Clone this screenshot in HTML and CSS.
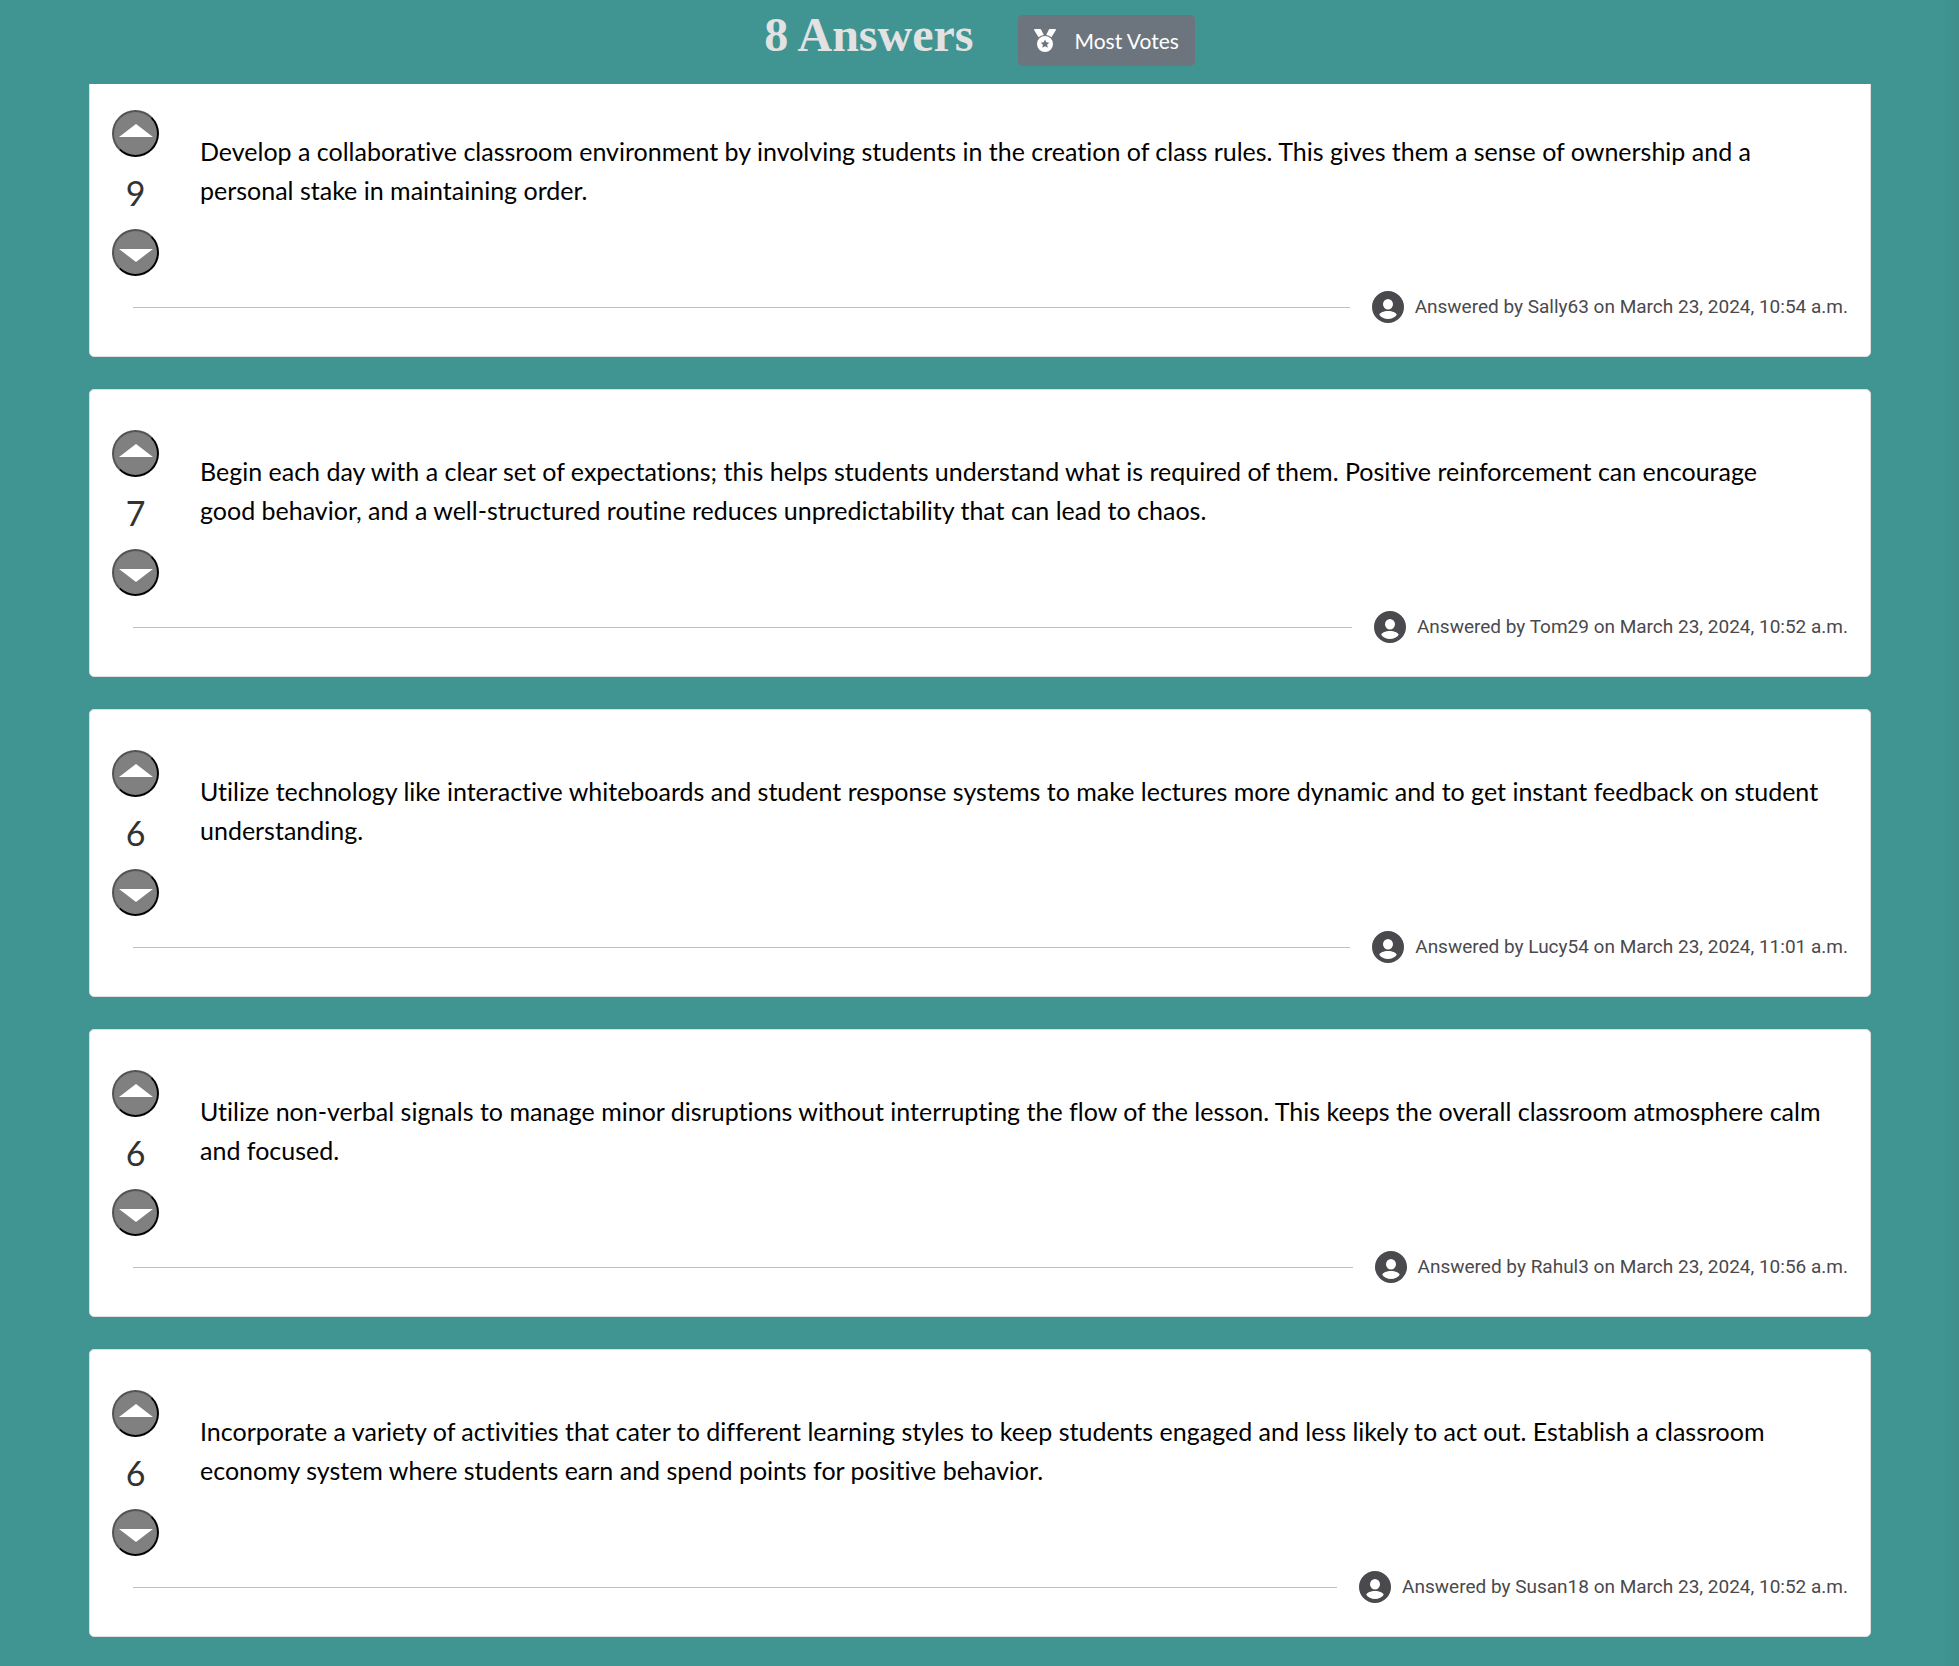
FILE: index.html
```html
<!DOCTYPE html>
<html lang="en">
<head>
<meta charset="utf-8">
<meta name="viewport" content="width=device-width, initial-scale=1">
<title>Answers</title>
<link rel="stylesheet" href="styles.css">
</head>
<body>
<svg class="sprite" aria-hidden="true">
  <symbol id="up" viewBox="0 0 34 13"><path d="M0 13 17 0l17 13z"/></symbol>
  <symbol id="down" viewBox="0 0 34 13"><path d="M0 0h34L17 13z"/></symbol>
  <symbol id="user" viewBox="0 0 32 32"><path fill-rule="evenodd" d="M16 0a16 16 0 1 1 0 32 16 16 0 0 1 0-32zm0 8a5 5.300 0 1 0 0 10.600A5 5.300 0 0 0 16 8zm0 12c-4.500 0-8.200 1.700-8.700 3.800 1.400 2.600 5 4.200 8.700 4.200s7.300-1.600 8.700-4.200C24.200 21.700 20.500 20 16 20z"/></symbol>
</svg>
<header class="topbar">
  <h1 class="title">8 Answers</h1>
  <button class="sort" type="button">
    <svg class="medal" viewBox="0 0 22 23" aria-hidden="true"><path fill-rule="evenodd" d="M.800 0H6c.5 0 .9.200 1.100.600L9.800 5.900A9 9 0 0 0 4.600 8.300L.200 1.200C-.200.600.200 0 .800 0zm20.400 0H16c-.5 0-.9.200-1.100.600l-2.700 5.300a9 9 0 0 1 5.200 2.400l4.400-7.100c.4-.6 0-1.200-.6-1.200zM11 7a8 8 0 1 1 0 16 8 8 0 0 1 0-16zm0 3.600-1.300 2.700-3 .4 2.200 2.100-.6 3 2.700-1.500 2.700 1.500-.6-3 2.200-2.100-3-.4z"/></svg>
    <span>Most Votes</span>
  </button>
</header>
<main class="answers">
  <article class="card">
    <div class="content">
      <div class="votes">
        <button class="vote" type="button" aria-label="Vote up"><svg class="arrow arrow-up"><use href="#up"/></svg></button>
        <span class="count">9</span>
        <button class="vote" type="button" aria-label="Vote down"><svg class="arrow arrow-down"><use href="#down"/></svg></button>
      </div>
      <p class="text">Develop a collaborative classroom environment by involving students in the creation of class rules. This gives them a sense of ownership and a personal stake in maintaining order.</p>
    </div>
    <footer class="meta"><hr class="rule"><svg class="user" aria-hidden="true"><use href="#user"/></svg><span>Answered by Sally63 on March 23, 2024, 10:54 a.m.</span></footer>
  </article>
  <article class="card">
    <div class="content">
      <div class="votes">
        <button class="vote" type="button" aria-label="Vote up"><svg class="arrow arrow-up"><use href="#up"/></svg></button>
        <span class="count">7</span>
        <button class="vote" type="button" aria-label="Vote down"><svg class="arrow arrow-down"><use href="#down"/></svg></button>
      </div>
      <p class="text">Begin each day with a clear set of expectations; this helps students understand what is required of them. Positive reinforcement can encourage<br>good behavior, and a well-structured routine reduces unpredictability that can lead to chaos.</p>
    </div>
    <footer class="meta"><hr class="rule"><svg class="user" aria-hidden="true"><use href="#user"/></svg><span>Answered by Tom29 on March 23, 2024, 10:52 a.m.</span></footer>
  </article>
  <article class="card">
    <div class="content">
      <div class="votes">
        <button class="vote" type="button" aria-label="Vote up"><svg class="arrow arrow-up"><use href="#up"/></svg></button>
        <span class="count">6</span>
        <button class="vote" type="button" aria-label="Vote down"><svg class="arrow arrow-down"><use href="#down"/></svg></button>
      </div>
      <p class="text">Utilize technology like interactive whiteboards and student response systems to make lectures more dynamic and to get instant feedback on student understanding.</p>
    </div>
    <footer class="meta"><hr class="rule"><svg class="user" aria-hidden="true"><use href="#user"/></svg><span>Answered by Lucy54 on March 23, 2024, 11:01 a.m.</span></footer>
  </article>
  <article class="card">
    <div class="content">
      <div class="votes">
        <button class="vote" type="button" aria-label="Vote up"><svg class="arrow arrow-up"><use href="#up"/></svg></button>
        <span class="count">6</span>
        <button class="vote" type="button" aria-label="Vote down"><svg class="arrow arrow-down"><use href="#down"/></svg></button>
      </div>
      <p class="text">Utilize non-verbal signals to manage minor disruptions without interrupting the flow of the lesson. This keeps the overall classroom atmosphere calm and focused.</p>
    </div>
    <footer class="meta"><hr class="rule"><svg class="user" aria-hidden="true"><use href="#user"/></svg><span>Answered by Rahul3 on March 23, 2024, 10:56 a.m.</span></footer>
  </article>
  <article class="card">
    <div class="content">
      <div class="votes">
        <button class="vote" type="button" aria-label="Vote up"><svg class="arrow arrow-up"><use href="#up"/></svg></button>
        <span class="count">6</span>
        <button class="vote" type="button" aria-label="Vote down"><svg class="arrow arrow-down"><use href="#down"/></svg></button>
      </div>
      <p class="text">Incorporate a variety of activities that cater to different learning styles to keep students engaged and less likely to act out. Establish a classroom economy system where students earn and spend points for positive behavior.</p>
    </div>
    <footer class="meta"><hr class="rule"><svg class="user" aria-hidden="true"><use href="#user"/></svg><span>Answered by Susan18 on March 23, 2024, 10:52 a.m.</span></footer>
  </article>
</main>
</body>
</html>
```
FILE: styles.css
```css
* { box-sizing: border-box; }
body {
  margin: 0;
  background: linear-gradient(to left, #3e8e8c, #409492 16px);
  font-family: Lato, sans-serif;
  font-variant-ligatures: none;
  color: #000;
}
.sprite { display: none; }
.topbar {
  position: sticky;
  top: 0;
  z-index: 1;
  display: flex;
  justify-content: center;
  gap: 44px;
  height: 84px;
  padding-top: 15px;
  background: linear-gradient(to left, #3e8e8c, #409492 16px);
}
.title {
  margin: 0;
  font: bold 48px/40px "Liberation Serif", serif;
  color: #e2e2e2;
}
.sort {
  display: flex;
  align-items: center;
  gap: 19px;
  height: 51px;
  padding: 0 16px;
  border: 0;
  border-radius: 5px;
  background: #6c757d;
  color: #fff;
  font: 21px/32px Lato, sans-serif;
}
.medal { width: 22px; height: 23px; fill: currentColor; }
.answers {
  display: flex;
  flex-direction: column;
  gap: 32px;
  margin: -15px 88px 0 89px;
  padding-bottom: 27px;
}
.card {
  padding: 40px 22px 33px;
  border: 1px solid #dfdfdf;
  border-radius: 5px;
  background: #fff;
}
.content { display: flex; gap: 41px; }
.votes {
  display: flex;
  flex-direction: column;
  align-items: center;
  justify-content: space-between;
  flex: none;
  height: 166px;
}
.vote {
  display: flex;
  align-items: center;
  justify-content: center;
  width: 47px;
  height: 47px;
  padding: 0;
  border: 2px outset #000;
  border-radius: 50%;
  background: #808080;
}
.arrow { width: 34px; height: 13px; fill: #fff; }
.arrow-up { margin-bottom: 6px; }
.arrow-down { margin-top: 6px; }
.count { font-size: 34px; line-height: 40px; color: #333; }
.text { margin: 22px 0 0; font-size: 25px; line-height: 39px; }
.meta {
  display: flex;
  align-items: center;
  gap: 11px;
  margin-left: 21px;
  padding-top: 15px;
  font: 19px/32px Roboto, sans-serif;
  color: #4a494d;
}
.rule { flex: 1; margin: 0 11px 0 0; border: 0; border-top: 1px solid #bfbfbf; }
.user { flex: none; width: 32px; height: 32px; fill: #4a494d; }
```
